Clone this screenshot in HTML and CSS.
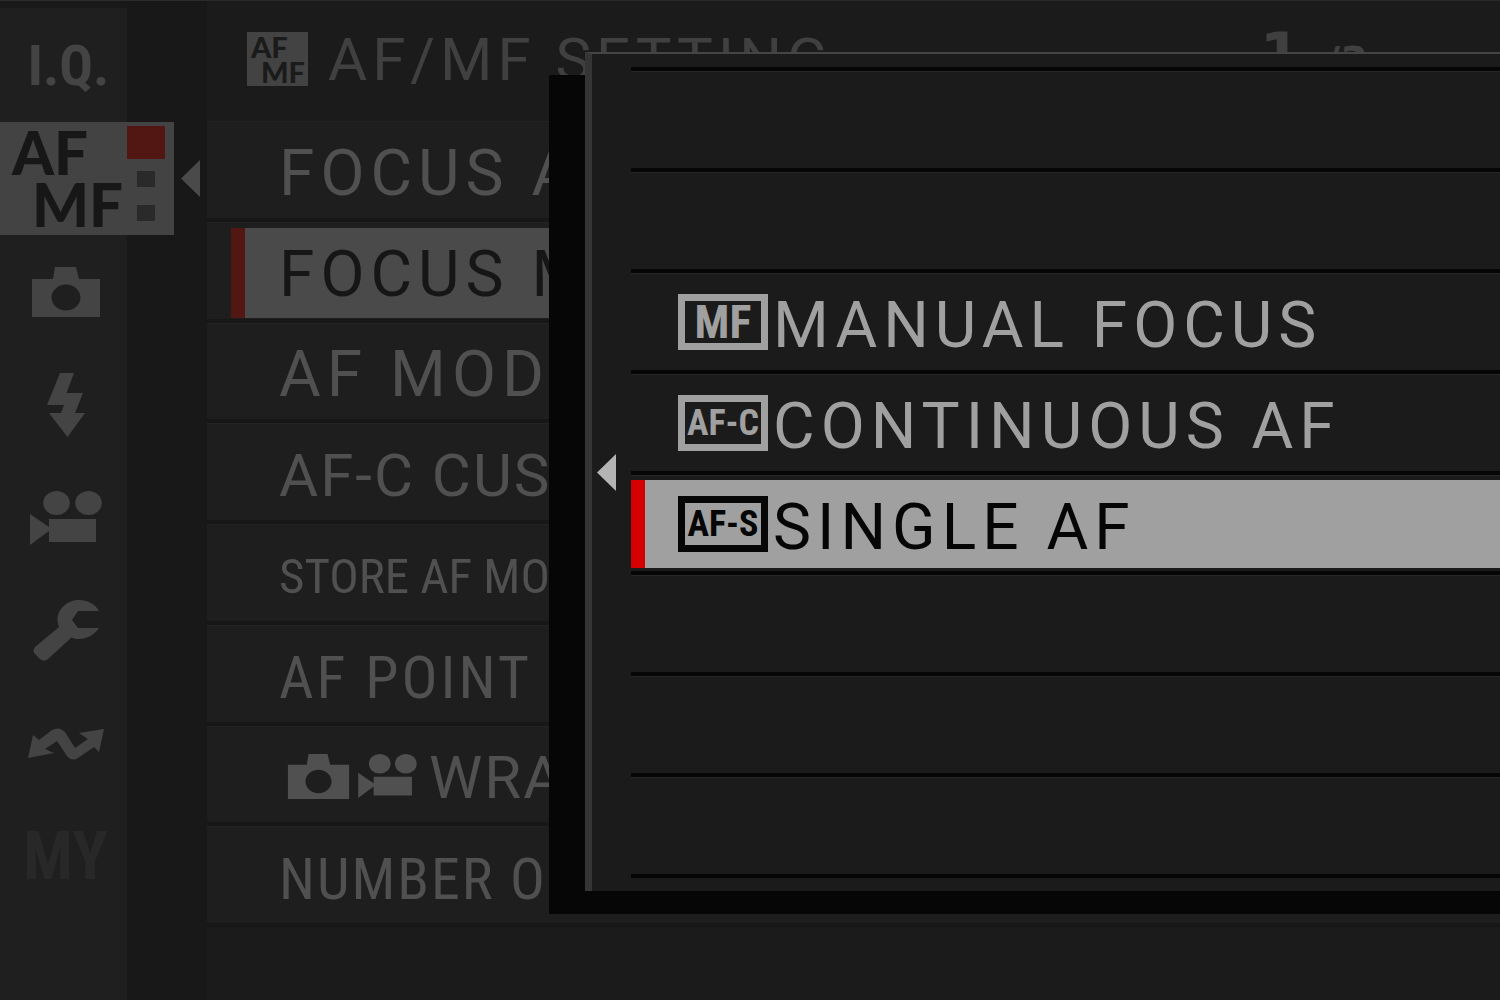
FILE: index.html
```html
<!DOCTYPE html>
<html lang="en">
<head>
<meta charset="utf-8">
<title>AF/MF Setting</title>
<link rel="stylesheet" href="styles.css">
</head>
<body>
<svg class="sprite" aria-hidden="true">
  <symbol id="camera" viewBox="0 0 68 50">
    <path fill-rule="evenodd" d="M0 12H21L23 0H44L47 12H68V50H0ZM34 17.500C26 17.500 19.500 23.500 19.500 30.500S26 43.500 34 43.500S48.500 37.500 48.500 30.500S42 17.500 34 17.500Z"/>
  </symbol>
  <symbol id="movie" viewBox="0 0 72 54">
    <ellipse cx="26.500" cy="12" rx="13.300" ry="12"/>
    <ellipse cx="58.500" cy="12" rx="13.300" ry="12"/>
    <path d="M0 23L19 36V28H66V51H19V40L0 54Z"/>
  </symbol>
  <symbol id="arrow" viewBox="0 0 19 37">
    <path d="M19 0V37L0 18.500Z"/>
  </symbol>
</svg>

<div class="screen">
  <nav class="tabs" aria-label="Menu tabs">
    <button class="tab tab-iq">I.Q.</button>
    <button class="tab tab-active" aria-current="page">
      <span class="afmf"><span>AF</span><span>MF</span></span>
      <span class="pages"><i></i><i></i><i></i></span>
    </button>
    <button class="tab" aria-label="Shooting"><svg width="68" height="50"><use href="#camera"/></svg></button>
    <button class="tab" aria-label="Flash"><svg width="38" height="64" viewBox="0 0 38 64"><path d="M13 0H27L19.500 20H36L28 40H38L20.500 64L2 40H14L17 32H0Z"/></svg></button>
    <button class="tab" aria-label="Movie"><svg width="72" height="54"><use href="#movie"/></svg></button>
    <button class="tab" aria-label="Set up"><svg width="66" height="61" viewBox="0 0 66 61"><path d="M66 11H45L39 20L45 28H66C61 35 54 39 46 39C43 39 41 38.500 38.500 37.500L15 59Q11 62.500 7 59L2 54Q-1 51 2 47L26 27C25 24 24.500 22 24.500 19C25 8 35 0 46 0C55 0 62 4 66 11Z"/></svg></button>
    <button class="tab" aria-label="Network"><svg width="76" height="32" viewBox="0 0 76 32"><path d="M0 30L5 7L11 12L24 2Q31-2 37 4L47 20L60 11L51 5L76 1L71 24L66 19L50 30Q44 34 39 28L29 13L17 21L26 25Z"/></svg></button>
    <button class="tab tab-my" disabled>MY</button>
  </nav>

  <div class="gutter"><svg class="gutter-arrow" width="19" height="37"><use href="#arrow"/></svg></div>

  <main class="menu">
    <header class="menu-head">
      <span class="afmf afmf-small"><span>AF</span><span>MF</span></span>
      <h1 class="title">AF/MF SETTING</h1>
      <p class="counter"><b>1</b>/3</p>
    </header>
    <ul class="items">
      <li><button class="item">FOCUS AREA</button></li>
      <li><button class="item item-selected">FOCUS MODE</button></li>
      <li><button class="item">AF MODE</button></li>
      <li><button class="item item-medium">AF-C CUSTOM SETTINGS</button></li>
      <li><button class="item item-small">STORE AF MODE BY ORIENTATION</button></li>
      <li><button class="item item-narrow">AF POINT DISPLAY</button></li>
      <li><button class="item item-medium"><svg class="item-camera" width="63" height="45"><use href="#camera"/></svg><svg class="item-movie" width="59" height="44"><use href="#movie"/></svg>WRAP FOCUS POINT</button></li>
      <li><button class="item item-tight">NUMBER OF FOCUS POINTS</button></li>
    </ul>
  </main>

  <section class="dialog" role="dialog" aria-label="Focus mode">
    <svg class="dialog-arrow" width="19" height="37"><use href="#arrow"/></svg>
    <ul class="options">
      <li></li>
      <li></li>
      <li><button class="option"><span class="badge badge-mf">MF</span>MANUAL FOCUS</button></li>
      <li><button class="option"><span class="badge">AF-C</span>CONTINUOUS AF</button></li>
      <li><button class="option option-selected" aria-pressed="true"><span class="badge">AF-S</span>SINGLE AF</button></li>
      <li></li>
      <li></li>
      <li></li>
    </ul>
  </section>
</div>
</body>
</html>
```
FILE: styles.css
```css
* { box-sizing: border-box; }

body {
  margin: 0;
  background: #1b1b1b;
  font-family: Roboto, "Liberation Sans", sans-serif;
}

ul { margin: 0; padding: 0; list-style: none; }

button {
  border: 0;
  padding: 0;
  background: none;
  color: inherit;
  font: inherit;
  letter-spacing: inherit;
  text-align: left;
  white-space: nowrap;
}

svg { display: block; flex: none; fill: currentColor; }

.sprite { position: absolute; width: 0; height: 0; }

.screen {
  position: relative;
  display: grid;
  grid-template-columns: 127px 80px minmax(0, 1fr);
  min-height: 100vh;
  overflow: hidden;
  border-top: 1px solid #2b2b2b;
}

/* Tab column */
.tabs {
  display: flex;
  flex-direction: column;
  padding-top: 8px;
  background: linear-gradient(#191919 7px, #1f1f1f 7px);
  color: #444;
}

.tab {
  display: flex;
  align-items: center;
  justify-content: center;
  height: 113px;
  padding-left: 4px;
  font-family: "Roboto Condensed", Roboto, sans-serif;
  font-weight: 700;
}

.tab-iq { font-size: 56px; padding-left: 10px; }
.tab-my { font-size: 66px; color: #282828; }

.tab-active {
  position: relative;
  z-index: 1;
  align-items: flex-start;
  justify-content: flex-start;
  width: 174px;
  padding: 4px 9px 0 12px;
  background: #434343;
  color: #171717;
}

.afmf {
  display: flex;
  flex-direction: column;
  font: 900 60px/52px Lato, sans-serif;
}

.afmf span + span { padding-left: 20px; }

.pages {
  display: flex;
  flex-direction: column;
  align-items: center;
  margin-left: auto;
}

.pages i { width: 18px; height: 16px; background: #2a2a2a; }
.pages i:first-child { width: 38px; height: 33px; background: #521713; }
.pages i:nth-child(2) { margin: 12px 0 18px; }

.gutter {
  padding: 159px 7px 0;
  background: #181818;
  color: #4a4a4a;
}

.gutter-arrow { margin-left: auto; }

/* Menu page */
.menu-head {
  display: flex;
  align-items: center;
  height: 120px;
  padding: 0 132px 4px 40px;
  color: #404040;
}

.afmf-small {
  width: 61px;
  height: 54px;
  padding: 2px 0 0 4px;
  background: #434343;
  color: #1b1b1b;
  font-size: 29px;
  line-height: 25px;
}

.afmf-small span + span { padding-left: 10px; }

.title {
  margin: 0 auto 0 20px;
  font-size: 60px;
  font-weight: 400;
  letter-spacing: 5px;
}

.counter {
  margin: 0 0 2px;
  font: 700 40px/60px "DejaVu Sans", sans-serif;
}

.counter b { font-size: 60px; margin-right: 24px; }

.items {
  display: grid;
  grid-template-rows: repeat(8, 1fr);
  height: 806px;
  background: #1e1e1e;
  color: #505050;
}

.items li {
  display: flex;
  padding: 6px 0 1px 24px;
  border-bottom: 4px solid #171717;
  box-shadow: inset 0 1px #232323;
}

.item {
  display: flex;
  align-items: center;
  flex: 1;
  min-width: 0;
  border-left: 14px solid transparent;
  padding: 4px 0 0 34px;
  font-size: 64px;
  line-height: 64px;
  letter-spacing: 6px;
}

.item-selected {
  border-color: #521713;
  background: #4a4a4a;
  color: #161616;
}

.item-medium { font-size: 60px; letter-spacing: 2px; }

.item-narrow,
.item-tight,
.item-small { font-family: "Roboto Condensed", Roboto, sans-serif; }

.item-narrow { font-size: 60px; letter-spacing: 3px; }
.item-tight { font-size: 58px; letter-spacing: 2px; }
.item-small { font-size: 49px; letter-spacing: 0; }

.item-camera { margin: 0 8px 4px; }
.item-movie { margin: 0 12px 4px 0; }

/* Option dialog over the menu */
.dialog {
  position: absolute;
  top: 51px;
  left: 585px;
  right: -40px;
  display: flex;
  align-items: center;
  padding: 13px 0 13px 5px;
  border-top: 2px solid #454545;
  border-left: 7px solid #353535;
  background: #1b1b1b;
  box-shadow: -36px 23px #060606;
  color: #a0a0a0;
}

.dialog-arrow { margin-right: 15px; color: #b4b4b4; }

.options {
  flex: 1;
  display: grid;
  grid-template-rows: repeat(8, 1fr);
  height: 811px;
  border-bottom: 4px solid #060606;
}

.options li {
  display: flex;
  padding: 5px 0 3px;
  border-top: 4px solid #060606;
  box-shadow: inset 0 1px #262626;
}

.option {
  display: flex;
  align-items: center;
  flex: 1;
  border-left: 14px solid transparent;
  padding: 8px 0 0 33px;
  font-size: 64px;
  line-height: 64px;
  letter-spacing: 6px;
}

.option-selected {
  border-color: #d40000;
  background: #a0a0a0;
  color: #060606;
}

.badge {
  display: flex;
  align-items: center;
  justify-content: center;
  width: 90px;
  height: 56px;
  margin: 0 5px 8px 0;
  border: 7px solid;
  font: 700 36px/42px "Roboto Condensed", Roboto, sans-serif;
  letter-spacing: 0;
}

.badge-mf { font-size: 46px; }
```
